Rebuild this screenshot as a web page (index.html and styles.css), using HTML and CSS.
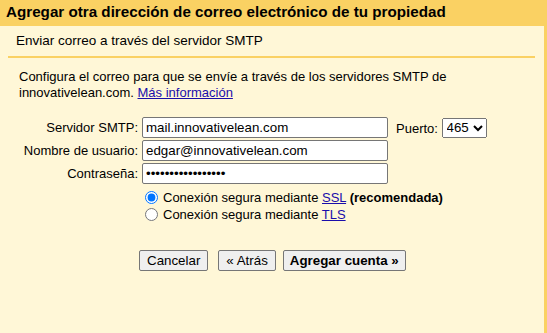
FILE: index.html
```html
<!DOCTYPE html>
<html lang="es">
<head>
<meta charset="utf-8">
<title>Agregar otra dirección de correo electrónico</title>
<link rel="stylesheet" href="styles.css">
</head>
<body>

<div class="dialog">
    <h1 class="dialogTitle">Agregar otra dirección de correo electrónico de tu propiedad</h1>
    <div class="dialogBody">
        <h2 class="stepTitle">Enviar correo a través del servidor SMTP</h2>
        <p class="intro">Configura el correo para que se envíe a través de los servidores SMTP de<br>
        innovativelean.com. <a href="#">Más información</a></p>

        <div class="smtpForm">
            <label class="fieldLabel">Servidor SMTP:</label>
            <input class="textField" type="text" value="mail.innovativelean.com">
            <div class="portField">
                <label>Puerto:</label>
                <select class="portSelect">
                    <option>465</option>
                    <option>587</option>
                    <option>25</option>
                </select>
            </div>

            <label class="fieldLabel">Nombre de usuario:</label>
            <input class="textField" type="text" value="edgar@innovativelean.com">
            <span></span>

            <label class="fieldLabel">Contraseña:</label>
            <input class="textField" type="password" value="passwordpassword1">
            <span></span>
        </div>

        <ul class="securityOptions">
            <li>
                <input type="radio" name="security" id="ssl" checked>
                <label for="ssl">Conexión segura mediante <a href="#">SSL</a> <strong>(recomendada)</strong></label>
            </li>
            <li>
                <input type="radio" name="security" id="tls">
                <label for="tls">Conexión segura mediante <a href="#">TLS</a></label>
            </li>
        </ul>

        <div class="actions">
            <button class="btn">Cancelar</button>
            <button class="btn btnBack">« Atrás</button>
            <button class="btn btnPrimary">Agregar cuenta »</button>
        </div>
    </div>
</div>

</body>
</html>
```

FILE: styles.css
```css
html, body {
    margin: 0;
    padding: 0;
    height: 100%;
}
body {
    background-color: #fff7d7;
    font-family: "Liberation Sans", Arial, sans-serif;
    font-size: 13px;
    color: #000;
}
.dialog {
    min-height: 100%;
    box-sizing: border-box;
    border-right: 3px solid #fad163;
}
.dialogTitle {
    margin: 0;
    height: 26px;
    line-height: 24px;
    padding-left: 6px;
    background-color: #fad163;
    font-size: 15.2px;
    font-weight: bold;
}
.dialogBody {
    padding: 0 9px 0 8px;
}
.stepTitle {
    margin: 0;
    padding: 7px 0 0 8px;
    height: 23px;
    font-size: 13.5px;
    font-weight: normal;
    border-bottom: 2px solid #fad163;
}
.intro {
    margin: 11px 0 0 11px;
    line-height: 16px;
}
a {
    color: #1a0dab;
}
.smtpForm {
    display: grid;
    grid-template-columns: 130px 246px auto;
    column-gap: 4px;
    row-gap: 2px;
    align-items: center;
    margin-top: 16px;
}
.fieldLabel {
    text-align: right;
}
.textField {
    box-sizing: border-box;
    width: 246px;
    height: 21px;
    margin: 0;
    padding: 1px 3px;
    border: 1px solid #767676;
    border-radius: 2px;
    background: #fff;
    font-family: "Liberation Sans", Arial, sans-serif;
    font-size: 13.33px;
}
.portField {
    padding-left: 4px;
}
.portSelect {
    height: 20px;
    margin-left: 0;
    font-family: "Liberation Sans", Arial, sans-serif;
    font-size: 13.33px;
}
.securityOptions {
    list-style: none;
    margin: 5px 0 0 133px;
    padding: 0;
}
.securityOptions li {
    display: flex;
    align-items: center;
    height: 17px;
}
.securityOptions input {
    margin: 0 5px 0 4px;
    width: 13px;
    height: 13px;
}
.actions {
    display: flex;
    margin: 27px 0 0 131px;
}
.btn {
    height: 21px;
    padding: 1px 7px;
    border: 1px solid #767676;
    border-radius: 2px;
    background-color: #efefef;
    font-family: "Liberation Sans", Arial, sans-serif;
    font-size: 13.33px;
}
.btnBack {
    margin-left: 10px;
}
.btnPrimary {
    margin-left: 7px;
    padding: 1px 6px;
    font-weight: bold;
}
```
